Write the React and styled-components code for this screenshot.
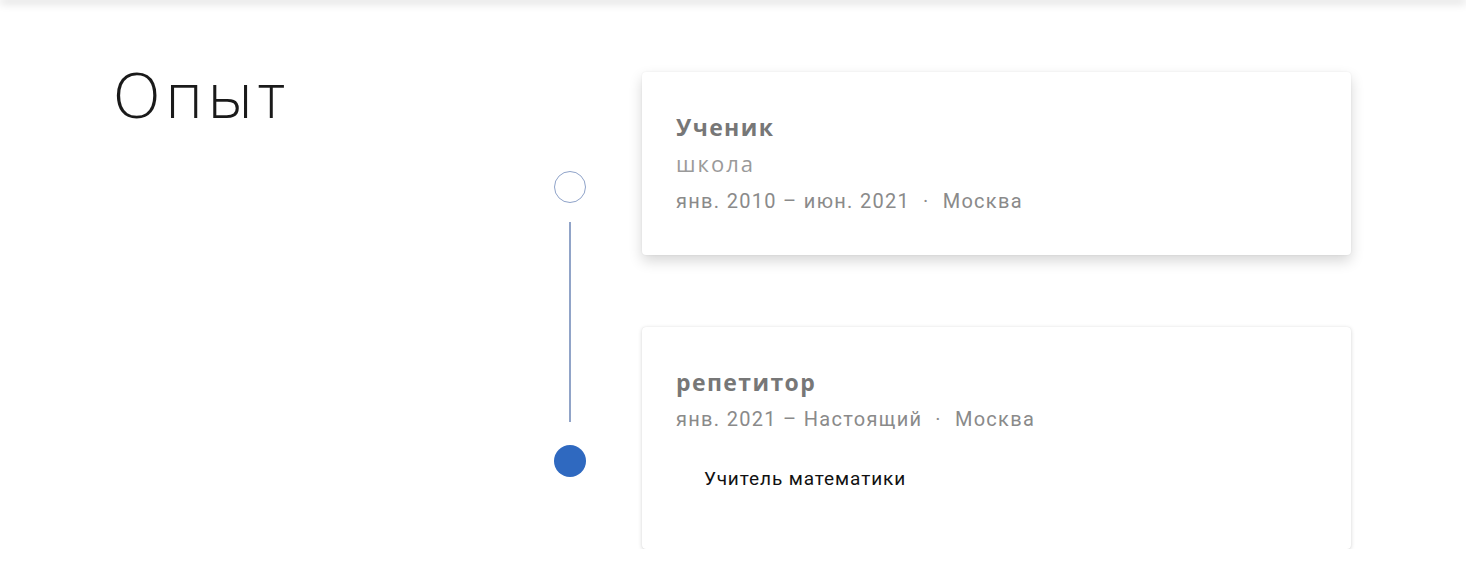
import React from "react";
import styled, { createGlobalStyle } from "styled-components";

const GlobalStyle = createGlobalStyle`
  html, body {
    margin: 0;
    padding: 0;
    background: #ffffff;
    font-family: Roboto, "Noto Sans", sans-serif;
  }
`;

const entries = [
  {
    title: "Ученик",
    place: "школа",
    period: "янв. 2010 – июн. 2021",
    city: "Москва",
    raised: true,
  },
  {
    title: "репетитор",
    period: "янв. 2021 – Настоящий",
    city: "Москва",
    description: "Учитель математики",
  },
];

const TopBar = styled.div`
  height: 3px;
  margin-top: -3px;
  box-shadow: 0 2px 10px rgba(0, 0, 0, 0.28);
`;

const Section = styled.section`
  display: flex;
  padding: 58px 0 0 113px;
`;

const Heading = styled.h2`
  width: 440px;
  margin: 0;
  padding-top: 5px;
  font-family: "Open Sans", sans-serif;
  font-weight: 300;
  font-size: 62px;
  line-height: 1;
  color: #1a1a1a;
  letter-spacing: 5px;
`;

const Timeline = styled.div`
  width: 34px;
  display: flex;
  flex-direction: column;
  align-items: center;
  padding-top: 113px;
`;

const Dot = styled.div`
  width: 32px;
  height: 32px;
  box-sizing: border-box;
  border-radius: 50%;
  border: ${({ filled }) => (filled ? "none" : "1.5px solid #8fa3c9")};
  background: ${({ filled }) => (filled ? "#2f69c0" : "#fff")};
`;

const Line = styled.div`
  width: 2px;
  height: 200px;
  margin: 19px 0 23px;
  background: #91a4c8;
`;

const Cards = styled.div`
  display: flex;
  flex-direction: column;
  gap: 72px;
  margin-left: 55px;
  padding-top: 14px;
`;

const Card = styled.div`
  width: 709px;
  box-sizing: border-box;
  padding: 40px 34px ${({ raised }) => (raised ? "40px" : "58px")};
  border-radius: 4px;
  background: #fff;
  box-shadow: ${({ raised }) =>
    raised
      ? "0 6px 14px rgba(0, 0, 0, 0.16), 0 0 2px rgba(0, 0, 0, 0.08)"
      : "0 1px 4px rgba(0, 0, 0, 0.16), 0 0 1px rgba(0, 0, 0, 0.1)"};
`;

const Title = styled.div`
  font-family: "Open Sans", sans-serif;
  font-weight: 700;
  font-size: 23px;
  line-height: 30px;
  color: #777;
  letter-spacing: 1.4px;
`;

const Place = styled.div`
  margin-top: 7px;
  font-family: "Open Sans", sans-serif;
  font-size: 22px;
  line-height: 28px;
  color: #9a9a9a;
  letter-spacing: 2px;
`;

const Meta = styled.div`
  margin-top: ${({ tight }) => (tight ? "8px" : "10px")};
  font-size: 20px;
  line-height: 28px;
  color: #8a8a8a;
  letter-spacing: 1.3px;
  display: flex;
  gap: 13px;
`;

const Description = styled.div`
  margin: 34px 0 0 28px;
  font-size: 19px;
  line-height: 24px;
  color: #111;
  letter-spacing: 0.9px;
`;

export default function App() {
  return (
    <>
      <GlobalStyle />
      <TopBar />
      <Section>
        <Heading>Опыт</Heading>
        <Timeline>
          <Dot />
          <Line />
          <Dot filled />
        </Timeline>
        <Cards>
          {entries.map((e) => (
            <Card key={e.title} raised={e.raised}>
              <Title>{e.title}</Title>
              {e.place && <Place>{e.place}</Place>}
              <Meta tight={!e.place}>
                <span>{e.period}</span>
                <span>·</span>
                <span>{e.city}</span>
              </Meta>
              {e.description && <Description>{e.description}</Description>}
            </Card>
          ))}
        </Cards>
      </Section>
    </>
  );
}
